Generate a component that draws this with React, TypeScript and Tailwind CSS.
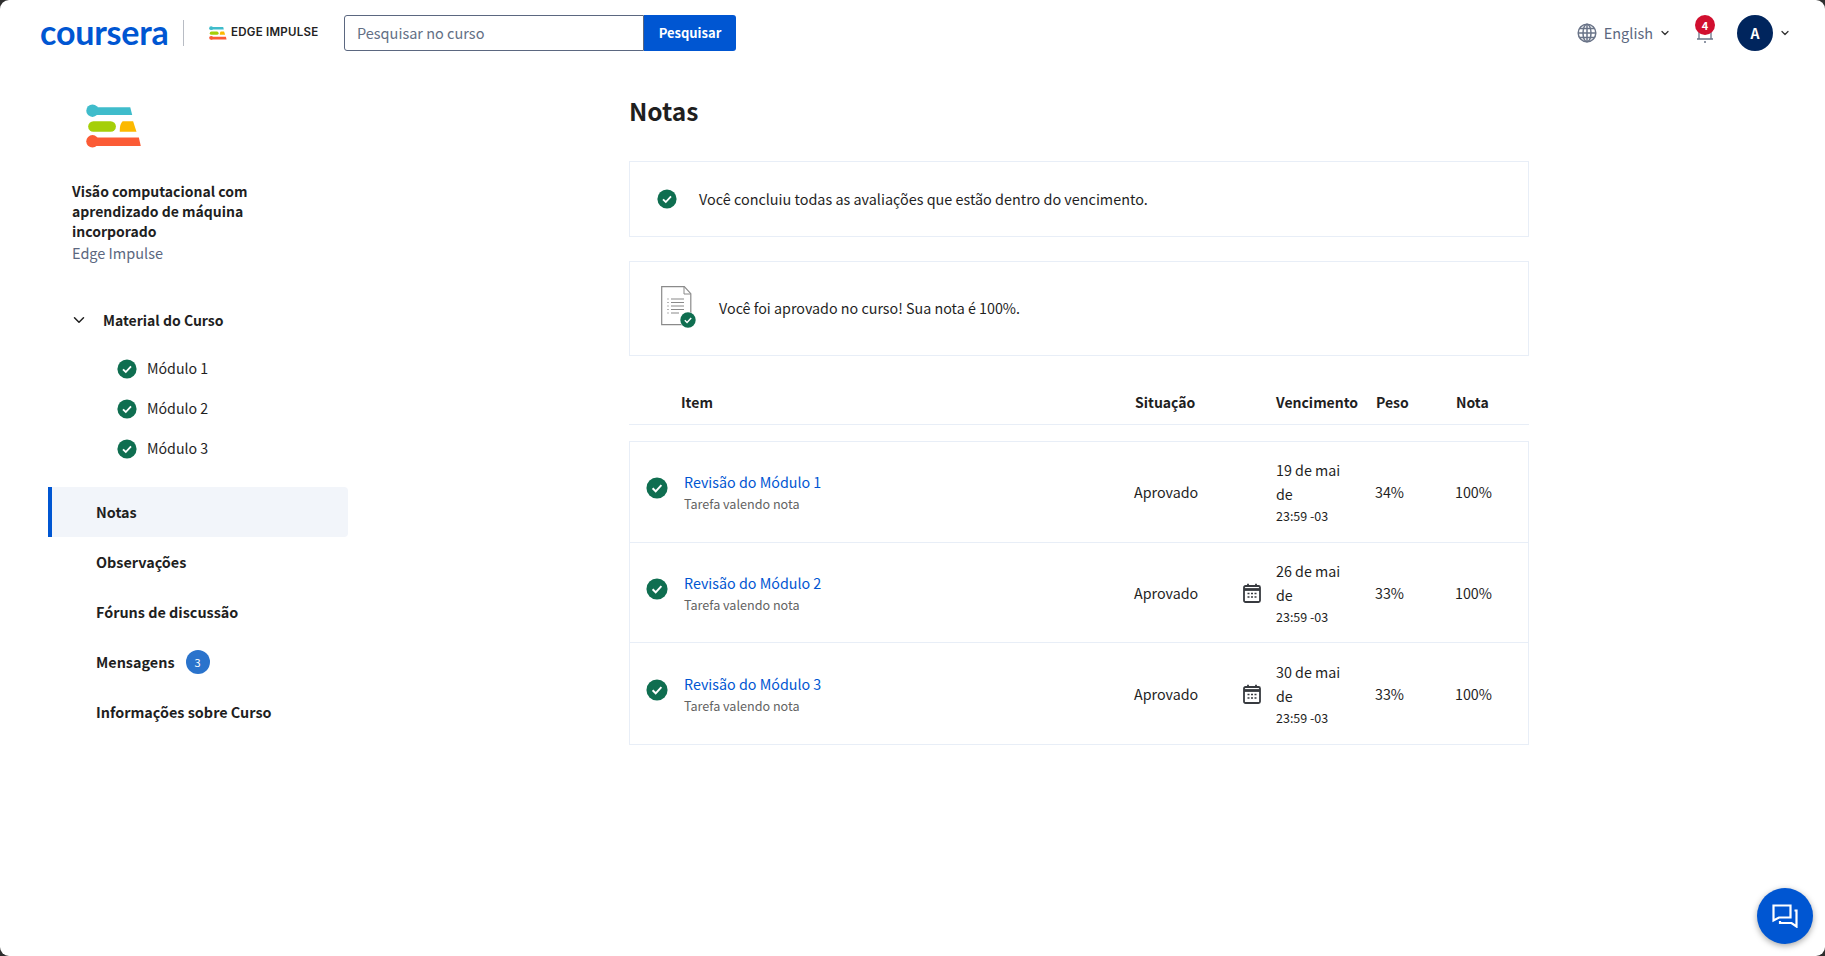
import React from "react";
import { ChevronDown } from "lucide-react";

const font = { fontFamily: '"Noto Sans CJK SC", "Noto Sans", sans-serif' };

function Check({ size = 20 }: { size?: number }) {
  return (
    <svg width={size} height={size} viewBox="0 0 20 20" className="shrink-0">
      <circle cx="10" cy="10" r="9.6" fill="#0f6e50" />
      <path d="M6 10.3l2.8 2.7L14 7.4" fill="none" stroke="#fff" strokeWidth="1.8" />
    </svg>
  );
}

function EdgeMark({ w, h }: { w: number; h: number }) {
  return (
    <svg width={w} height={h} viewBox="0 0 58 46">
      <circle cx="6.500" cy="7" r="6.500" fill="#3fbccb" />
      <path d="M6 3.500h40l2 8H6z" fill="#3fbccb" />
      <rect x="2" y="18" width="29" height="11" rx="5.500" fill="#a5cf08" />
      <path d="M38 18h11l3.500 11H35c0-3 0-8 3-11z" fill="#fcb900" />
      <circle cx="6.500" cy="39" r="6.500" fill="#fb5b35" />
      <path d="M6 35h49l2 9H6z" fill="#fb5b35" />
    </svg>
  );
}

function Calendar() {
  return (
    <svg width="18" height="20" viewBox="0 0 18 20" fill="none" className="shrink-0">
      <rect x="1" y="3" width="16" height="16" rx="1.500" stroke="#373a3f" strokeWidth="1.800" />
      <path d="M1 6.500h16" stroke="#373a3f" strokeWidth="2.800" />
      <path d="M5 .8v3M13 .8v3" stroke="#373a3f" strokeWidth="1.800" />
      <path d="M4.500 10.500h2M8 10.500h2M11.500 10.500h2M4.500 14h2M8 14h2M11.500 14h2" stroke="#373a3f" strokeWidth="1.500" />
    </svg>
  );
}

function Globe() {
  return (
    <svg width="20" height="20" viewBox="0 0 20 20" fill="none" stroke="#6a7488" strokeWidth="1.500">
      <circle cx="10" cy="10" r="8.800" />
      <ellipse cx="10" cy="10" rx="4" ry="8.800" />
      <path d="M10 1.200v17.600M1.200 10h17.600M2.500 5.500h15M2.500 14.500h15" />
    </svg>
  );
}

function DocIcon() {
  return (
    <div className="relative w-[36px] h-[42px] shrink-0 mb-[4px]">
      <svg width="36" height="42" viewBox="0 0 36 42" fill="none">
        <path d="M.7.700h22.600l6.500 7v31H.7z" fill="#fff" stroke="#8a8a8a" strokeWidth="1.200" />
        <path d="M23 1v7h6.500" stroke="#8a8a8a" strokeWidth="1" />
        <path d="M10 13h13M10 16.500h13M10 20h13M10 23.500h13M10 27h8" stroke="#8a8a8a" strokeWidth="1.200" />
        <path d="M6 13h2M6 16.500h2M6 20h2M6 23.500h2M6 27h2" stroke="#b5b5b5" strokeWidth="1" />
      </svg>
      <div className="absolute left-[19px] top-[26px] rounded-full bg-white">
        <Check size={16} />
      </div>
    </div>
  );
}

const navItems = ["Notas", "Observações", "Fóruns de discussão", "Mensagens", "Informações sobre Curso"];
const rows = [
  { name: "Revisão do Módulo 1", weight: "34%", date: "19 de mai de", cal: false },
  { name: "Revisão do Módulo 2", weight: "33%", date: "26 de mai de", cal: true },
  { name: "Revisão do Módulo 3", weight: "33%", date: "30 de mai de", cal: true },
];
const gridCols = "grid grid-cols-[504px_142px_101px_80px_1fr] items-center";

export default function App() {
  return (
    <div style={font} className="h-[956px] w-[1825px] overflow-hidden bg-[#2e2e2e] text-[#1f1f1f]">
      <div className="h-full w-full rounded-[9px] bg-white flex flex-col relative">
        <header className="h-[66px] flex items-center shrink-0 pl-[40px] pr-[34px]">
          <span className="text-[34px] leading-[32px] font-bold text-[#0056d2] tracking-[-0.2px] w-[127px] mb-[2px] font-['Lato',sans-serif]">coursera</span>
          <div className="w-px h-[26px] bg-[#b8bcc4] ml-[16px] mr-[25px]" />
          <div className="flex items-center gap-[4px] w-[110px]">
            <EdgeMark w={18} h={14} />
            <span className="text-[11.500px] font-semibold leading-none tracking-[0.25px] text-[#222] font-['Inter',sans-serif] whitespace-nowrap">EDGE IMPULSE</span>
          </div>
          <div className="flex ml-[25px]">
            <div className="w-[300px] h-[36px] border border-[#5b6780] rounded-l-[3px] flex items-center pl-[12px] text-[14.500px] text-[#636f85]">Pesquisar no curso</div>
            <div className="w-[92px] h-[36px] bg-[#0056d2] rounded-r-[3px] flex items-center justify-center text-white text-[13px] font-semibold">Pesquisar</div>
          </div>
          <div className="ml-auto flex items-center">
            <Globe />
            <span className="text-[14.500px] text-[#5b6780] ml-[7px]">English</span>
            <ChevronDown size={12} strokeWidth={2.500} className="ml-[6px] text-[#333]" />
            <div className="relative w-[20px] h-[24px] ml-[24px] flex items-center justify-center">
              <svg width="18" height="22" viewBox="0 0 18 22" fill="none" stroke="#6a7488" strokeWidth="1.300">
                <path d="M3 17V9a6 6 0 0112 0v8M1 17h16" />
                <path d="M8 20h2" />
              </svg>
              <div className="absolute left-0 top-[-6px] w-[20px] h-[20px] rounded-full bg-[#d10f2f] text-white text-[11px] font-bold flex items-center justify-center">4</div>
            </div>
            <div className="w-[36px] h-[36px] ml-[22px] rounded-full bg-[#00255d] text-white text-[14px] font-bold flex items-center justify-center">A</div>
            <ChevronDown size={12} strokeWidth={2.500} className="ml-[6px] text-[#333]" />
          </div>
        </header>

        <div className="flex flex-1">
          <aside className="w-[629px] shrink-0 pl-[48px]">
            <div className="pl-[36px] pt-[38px]"><EdgeMark w={60} h={44} /></div>
            <div className="pl-[24px] mt-[33px] w-[240px] text-[14px] leading-[20px] font-semibold">
              Visão computacional com aprendizado de máquina incorporado
            </div>
            <div className="pl-[24px] mt-[1px] text-[14.500px] leading-[22px] text-[#5b6780]">Edge Impulse</div>
            <div className="flex items-center pl-[24px] mt-[44px] h-[24px]">
              <ChevronDown size={18} strokeWidth={2} className="-ml-[2px]" />
              <span className="ml-[15px] text-[14px] font-semibold">Material do Curso</span>
            </div>
            <div className="flex flex-col pl-[69px] mt-[17px]">
              {["Módulo 1", "Módulo 2", "Módulo 3"].map((m) => (
                <div key={m} className="h-[40px] flex items-center gap-[10px] text-[14.200px]">
                  <Check /> {m}
                </div>
              ))}
            </div>
            <nav className="mt-[18px] w-[300px] flex flex-col">
              {navItems.map((n, i) => (
                <div
                  key={n}
                  className={
                    i === 0
                      ? "h-[50px] flex items-center pl-[44px] border-l-4 border-[#0056d2] bg-[#f2f5fa] rounded-r-[4px] text-[14.400px] font-bold"
                      : "h-[50px] flex items-center pl-[48px] text-[14.400px] font-bold"
                  }
                >
                  {n}
                  {n === "Mensagens" && (
                    <span className="ml-[11px] w-[24px] h-[24px] rounded-full bg-[#2a73cc] text-white text-[11px] font-normal flex items-center justify-center">3</span>
                  )}
                </div>
              ))}
            </nav>
          </aside>

          <main className="w-[900px] shrink-0">
            <h1 className="text-[24.500px] leading-[36px] font-semibold mt-[27px]">Notas</h1>
            <div className="mt-[32px] h-[76px] border border-[#e8eef7] flex items-center pl-[27px] text-[14.400px]">
              <Check />
              <span className="ml-[22px]">Você concluiu todas as avaliações que estão dentro do vencimento.</span>
            </div>
            <div className="mt-[24px] h-[95px] border border-[#e8eef7] flex items-center pl-[31px] text-[14.300px]">
              <DocIcon />
              <span className="ml-[22px] mb-[2px]">Você foi aprovado no curso! Sua nota é 100%.</span>
            </div>
            <div className={`${gridCols} mt-[31px] h-[38px] border-b border-[#e8eef7] text-[14px] font-semibold pb-[6px]`}>
              <div className="pl-[52px]">Item</div>
              <div className="pl-[2px]">Situação</div>
              <div className="pl-[1px]">Vencimento</div>
              <div>Peso</div>
              <div>Nota</div>
            </div>
            <div className="mt-[16px] border border-[#e8eef7] divide-y divide-[#e8eef7]">
              {rows.map((r) => (
                <div key={r.name} className={`${gridCols} h-[100.700px]`}>
                  <div className="flex items-center pl-[16px]">
                    <div className="mb-[8px]"><Check size={22} /></div>
                    <div className="ml-[16px] mt-[2px]">
                      <div className="text-[14.300px] leading-[22px] text-[#0056d2]">{r.name}</div>
                      <div className="text-[12.600px] leading-[21px] text-[#636363]">Tarefa valendo nota</div>
                    </div>
                  </div>
                  <div className="flex items-center justify-between pr-[15px] text-[14.300px]">
                    <span>Aprovado</span>
                    {r.cal && <Calendar />}
                  </div>
                  <div className="text-[14.300px] leading-[24px] w-[78px]">
                    {r.date}
                    <div className="text-[12.500px] leading-[20px]">23:59 -03</div>
                  </div>
                  <div className="text-[14.300px] -ml-[2px]">{r.weight}</div>
                  <div className="text-[14.300px] -ml-[2px]">100%</div>
                </div>
              ))}
            </div>
          </main>
        </div>

        <div className="absolute left-[1757px] top-[888px] w-[56px] h-[56px] rounded-full bg-[#0056d2] shadow-[0_2px_6px_rgba(0,0,0,0.35)] flex items-center justify-center">
          <svg width="26" height="24" viewBox="0 0 26 24" fill="none" stroke="#fff" strokeWidth="2.200">
            <path d="M1.500 1.500h17v12H7l-5.500 3z" />
            <path d="M22.500 6.500h2v16l-5-3.500H8v-2" />
          </svg>
        </div>
      </div>
    </div>
  );
}
